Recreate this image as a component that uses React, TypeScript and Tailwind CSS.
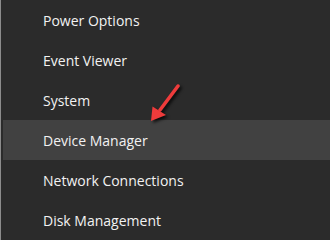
const items = [
  'Power Options',
  'Event Viewer',
  'System',
  'Device Manager',
  'Network Connections',
  'Disk Management',
]

export default function App() {
  return (
    <div className="relative w-[330px] h-[240px] overflow-hidden bg-[#2b2b2b] border-l border-[#8c8c8c] font-['Segoe_UI','Open_Sans',sans-serif]">
      <ul className="pl-[2px]">
        {items.map((label) => (
          <li
            key={label}
            className={`h-10 flex items-center pl-[40px] text-[14px] text-[#f2f2f2] ${
              label === 'Device Manager' ? 'bg-[#414141]' : ''
            }`}
          >
            {label}
          </li>
        ))}
      </ul>

      {/* red annotation arrow */}
      <svg
        className="absolute left-0 top-0 pointer-events-none drop-shadow-[2px_2px_1.5px_rgba(0,0,0,0.75)]"
        width="330"
        height="240"
        viewBox="0 0 330 240"
      >
        <line x1="177" y1="86" x2="159" y2="110" stroke="#ee3b3b" strokeWidth="3.5" strokeLinecap="round" />
        <polygon points="150,121 151.5,106.5 165,115" fill="#ee3b3b" />
      </svg>
    </div>
  )
}
